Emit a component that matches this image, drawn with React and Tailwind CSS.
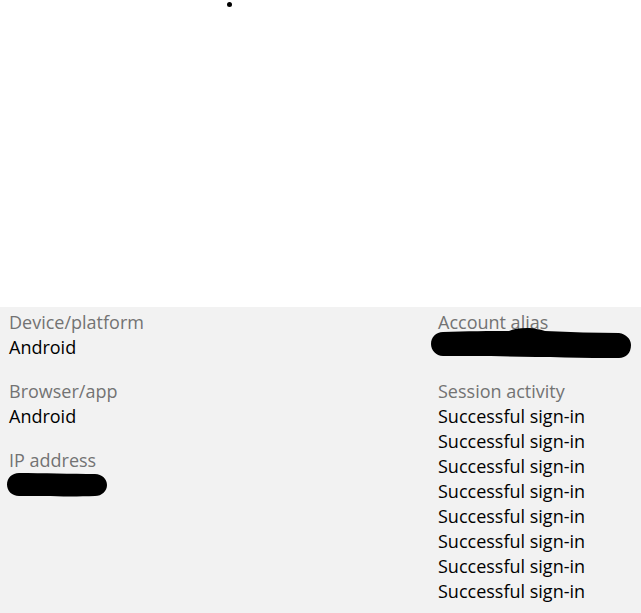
import React from 'react';

const Label = ({ children }) => (
  <div className="text-[#737373]">{children}</div>
);

const Redact = ({ w, h, d, className = '' }) => (
  <svg width={w} height={h} viewBox={`0 0 ${w} ${h}`} className={className}>
    <path d={d} fill="#000" />
  </svg>
);

export default function App() {
  const sessions = Array.from({ length: 8 });
  return (
    <div className="w-[641px] h-[613px] bg-white flex flex-col font-['Segoe_UI','Open_Sans',sans-serif] text-[18px] leading-[25px] text-black">
      <div className="relative h-[307px] shrink-0">
        <span className="absolute left-[227px] top-[2px] h-[5px] w-[5px] rounded-full bg-black" />
      </div>
      <div className="flex-1 bg-[#f2f2f2] pl-[9px] pt-[3px] grid grid-cols-[429px_1fr]">
        <div className="flex flex-col gap-[19px]">
          <div>
            <Label>Device/platform</Label>
            <div>Android</div>
          </div>
          <div>
            <Label>Browser/app</Label>
            <div>Android</div>
          </div>
          <div>
            <Label>IP address</Label>
            <div className="h-[25px] relative">
              <Redact
                w={100}
                h={24}
                className="absolute left-[-2px] top-[0px]"
                d="M12 0 C35 0 65 1 88 1 C95 1 100 6 100 12 C100 18 95 23 88 23 C65 24 35 23 12 23 C5 23 0 18 0 11.5 C0 5 5 0 12 0 Z"
              />
            </div>
          </div>
        </div>
        <div className="flex flex-col gap-[19px]">
          <div>
            <Label>Account alias</Label>
            <div className="h-[25px] relative">
              <Redact
                w={200}
                h={31}
                className="absolute left-[-7px] top-[-7px]"
                d="M12 4 C35 3 60 3 78 3 C82 1 88 0 96 0 C104 0 110 2 114 3 C140 4 165 5 188 5 C195 6 200 11 200 17 C200 25 195 30 188 30 C150 30 100 29 60 28 C40 28 25 28 12 28 C5 28 0 22 0 16 C0 9 5 4 12 4 Z"
              />
            </div>
          </div>
          <div>
            <Label>Session activity</Label>
            {sessions.map((_, i) => (
              <div key={i}>Successful sign-in</div>
            ))}
          </div>
        </div>
      </div>
    </div>
  );
}
